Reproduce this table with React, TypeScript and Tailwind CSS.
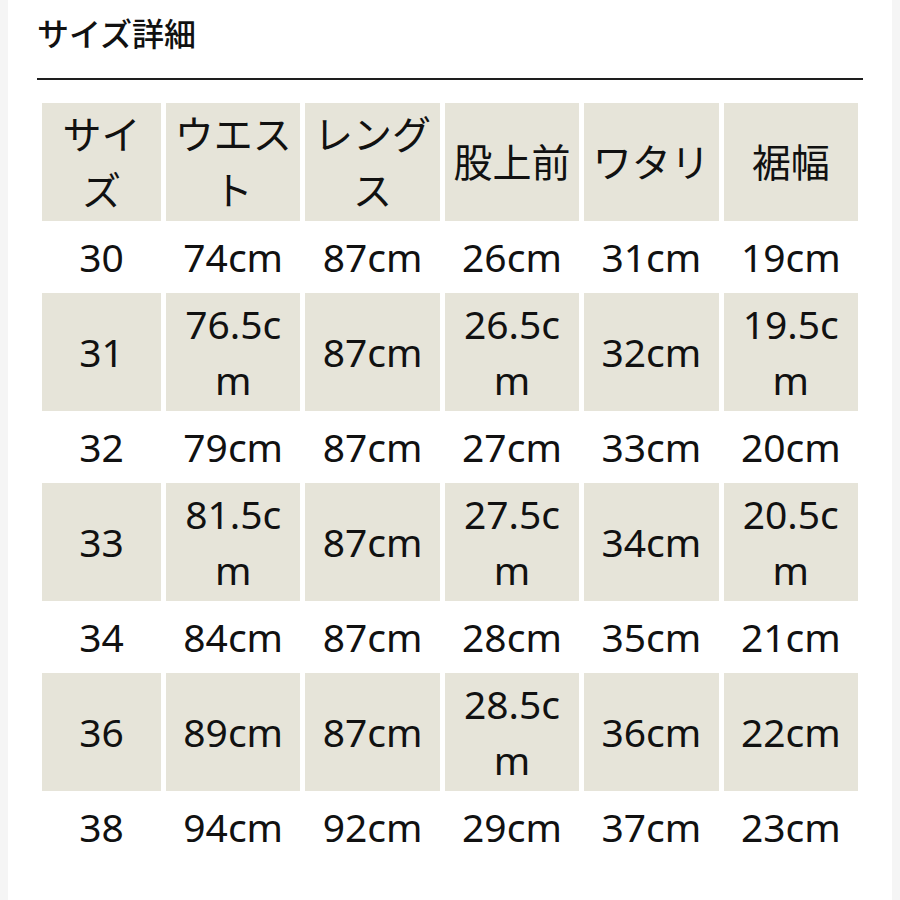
import React from "react";

const rows = [
  ["30", "74cm", "87cm", "26cm", "31cm", "19cm"],
  ["31", "76.5cm", "87cm", "26.5cm", "32cm", "19.5cm"],
  ["32", "79cm", "87cm", "27cm", "33cm", "20cm"],
  ["33", "81.5cm", "87cm", "27.5cm", "34cm", "20.5cm"],
  ["34", "84cm", "87cm", "28cm", "35cm", "21cm"],
  ["36", "89cm", "87cm", "28.5cm", "36cm", "22cm"],
  ["38", "94cm", "92cm", "29cm", "37cm", "23cm"],
];

const headers = ["サイズ", "ウエスト", "レングス", "股上前", "ワタリ", "裾幅"];

export default function App() {
  return (
    <div
      className="min-h-[900px] bg-[#f5f5f5] px-2"
      style={{ fontFamily: '"Noto Sans", "Noto Sans CJK JP", sans-serif' }}
    >
      <div className="min-h-[900px] bg-white px-[29px] pt-[10px] text-[#111]">
        <h2 className="h-12 text-[32px] leading-[48px] font-medium">サイズ詳細</h2>
        <div className="mt-[20px] h-[2px] bg-[#1e1e1e]"></div>

        <table className="mt-[18px] w-full table-fixed border-separate border-spacing-[5px] text-center text-[39px] leading-[56px] font-normal">
          <colgroup>
            <col className="w-[119px]" />
            <col />
            <col />
            <col />
            <col />
            <col />
          </colgroup>
          <thead>
            <tr>
              {headers.map((h) => (
                <th key={h} className="bg-[#e6e4d9] px-1.5 py-[3px] font-normal break-all">
                  {h}
                </th>
              ))}
            </tr>
          </thead>
          <tbody>
            {rows.map((r, i) => (
              <tr key={r[0]}>
                {r.map((c, j) => (
                  <td
                    key={j}
                    className={`px-1.5 py-[3px] break-all ${i % 2 === 1 ? "bg-[#e6e4d9]" : "bg-white"}`}
                  >
                    {c}
                  </td>
                ))}
              </tr>
            ))}
          </tbody>
        </table>
      </div>
    </div>
  );
}
